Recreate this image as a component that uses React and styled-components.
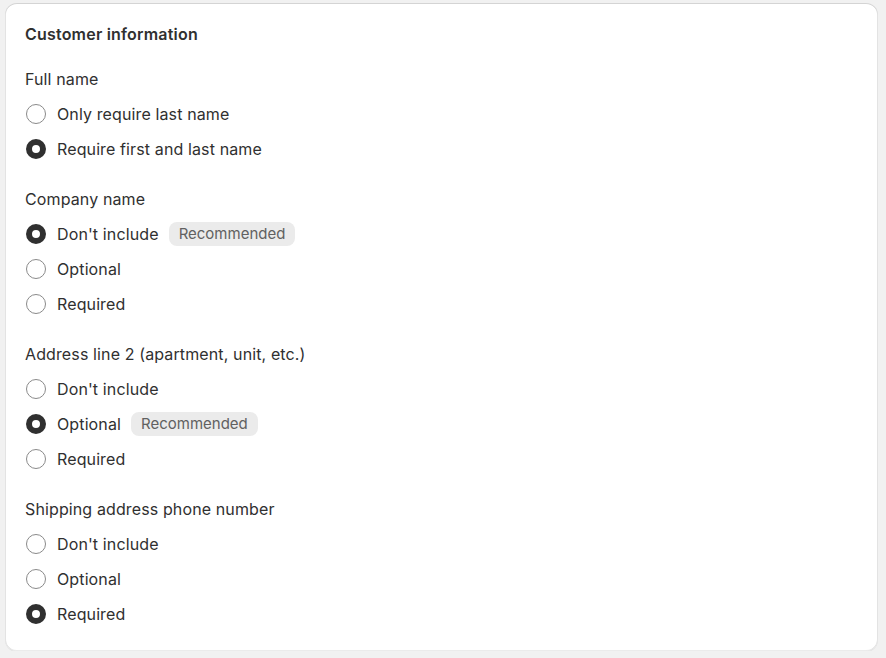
import React from 'react'
import styled, { createGlobalStyle } from 'styled-components'

const GlobalStyle = createGlobalStyle`
	body {
		margin: 0;
		background: #f1f1f1;
		font-family: Inter, "Noto Sans", sans-serif;
		color: #303030;
		-webkit-font-smoothing: antialiased;
	}
`

const Card = styled.section`
	box-sizing: border-box;
	width: 873px;
	margin: 3px 0 0 5px;
	padding: 20px 20px 27px;
	background: #ffffff;
	border-radius: 12px;
	box-shadow: 0 1px 0 0 rgba(26, 26, 26, 0.07), 0 1px 0 0 #d4d4d4 inset,
		-1px 0 0 0 #e3e3e3 inset, 1px 0 0 0 #e3e3e3 inset, 0 -1px 0 0 #ebebeb inset;
	display: flex;
	flex-direction: column;
	gap: 24px;
`

const Title = styled.h2`
	margin: 0;
	font-size: 16px;
	line-height: 22px;
	font-weight: 600;
	letter-spacing: 0.2px;
`

const Groups = styled.div`
	display: flex;
	flex-direction: column;
	gap: 30px;
`

const Group = styled.fieldset`
	margin: 0;
	padding: 0;
	border: 0;
	display: flex;
	flex-direction: column;
	gap: 15px;
`

const Legend = styled.div`
	font-size: 16px;
	line-height: 20px;
	letter-spacing: 0.12px;
`

const Option = styled.label`
	display: flex;
	align-items: center;
	height: 20px;
	font-size: 16px;
	line-height: 20px;
	letter-spacing: 0.12px;
`

const Radio = styled.span`
	box-sizing: border-box;
	flex: none;
	width: 20px;
	height: 20px;
	margin-left: 1px;
	margin-right: 11px;
	border-radius: 50%;
	border: ${({ $checked }) => ($checked ? '6.5px solid #303030' : '1px solid #8a8a8a')};
	background: #ffffff;
`

const Badge = styled.span`
	margin-left: 10px;
	height: 24px;
	padding: 0 10px;
	border-radius: 8px;
	background: #ebebeb;
	color: #616161;
	font-size: 15px;
	line-height: 24px;
	letter-spacing: 0;
`

const groups = [
	{
		label: 'Full name',
		options: ['Only require last name', 'Require first and last name'],
		checked: 1,
	},
	{
		label: 'Company name',
		options: ["Don't include", 'Optional', 'Required'],
		checked: 0,
		badge: 0,
	},
	{
		label: 'Address line 2 (apartment, unit, etc.)',
		options: ["Don't include", 'Optional', 'Required'],
		checked: 1,
		badge: 1,
	},
	{
		label: 'Shipping address phone number',
		options: ["Don't include", 'Optional', 'Required'],
		checked: 2,
	},
]

export default function App() {
	return (
		<>
			<GlobalStyle />
			<Card>
				<Title>Customer information</Title>
				<Groups>
					{groups.map((g) => (
						<Group key={g.label}>
							<Legend>{g.label}</Legend>
							{g.options.map((o, i) => (
								<Option key={o}>
									<Radio $checked={i === g.checked} />
									{o}
									{g.badge === i && <Badge>Recommended</Badge>}
								</Option>
							))}
						</Group>
					))}
				</Groups>
			</Card>
		</>
	)
}
